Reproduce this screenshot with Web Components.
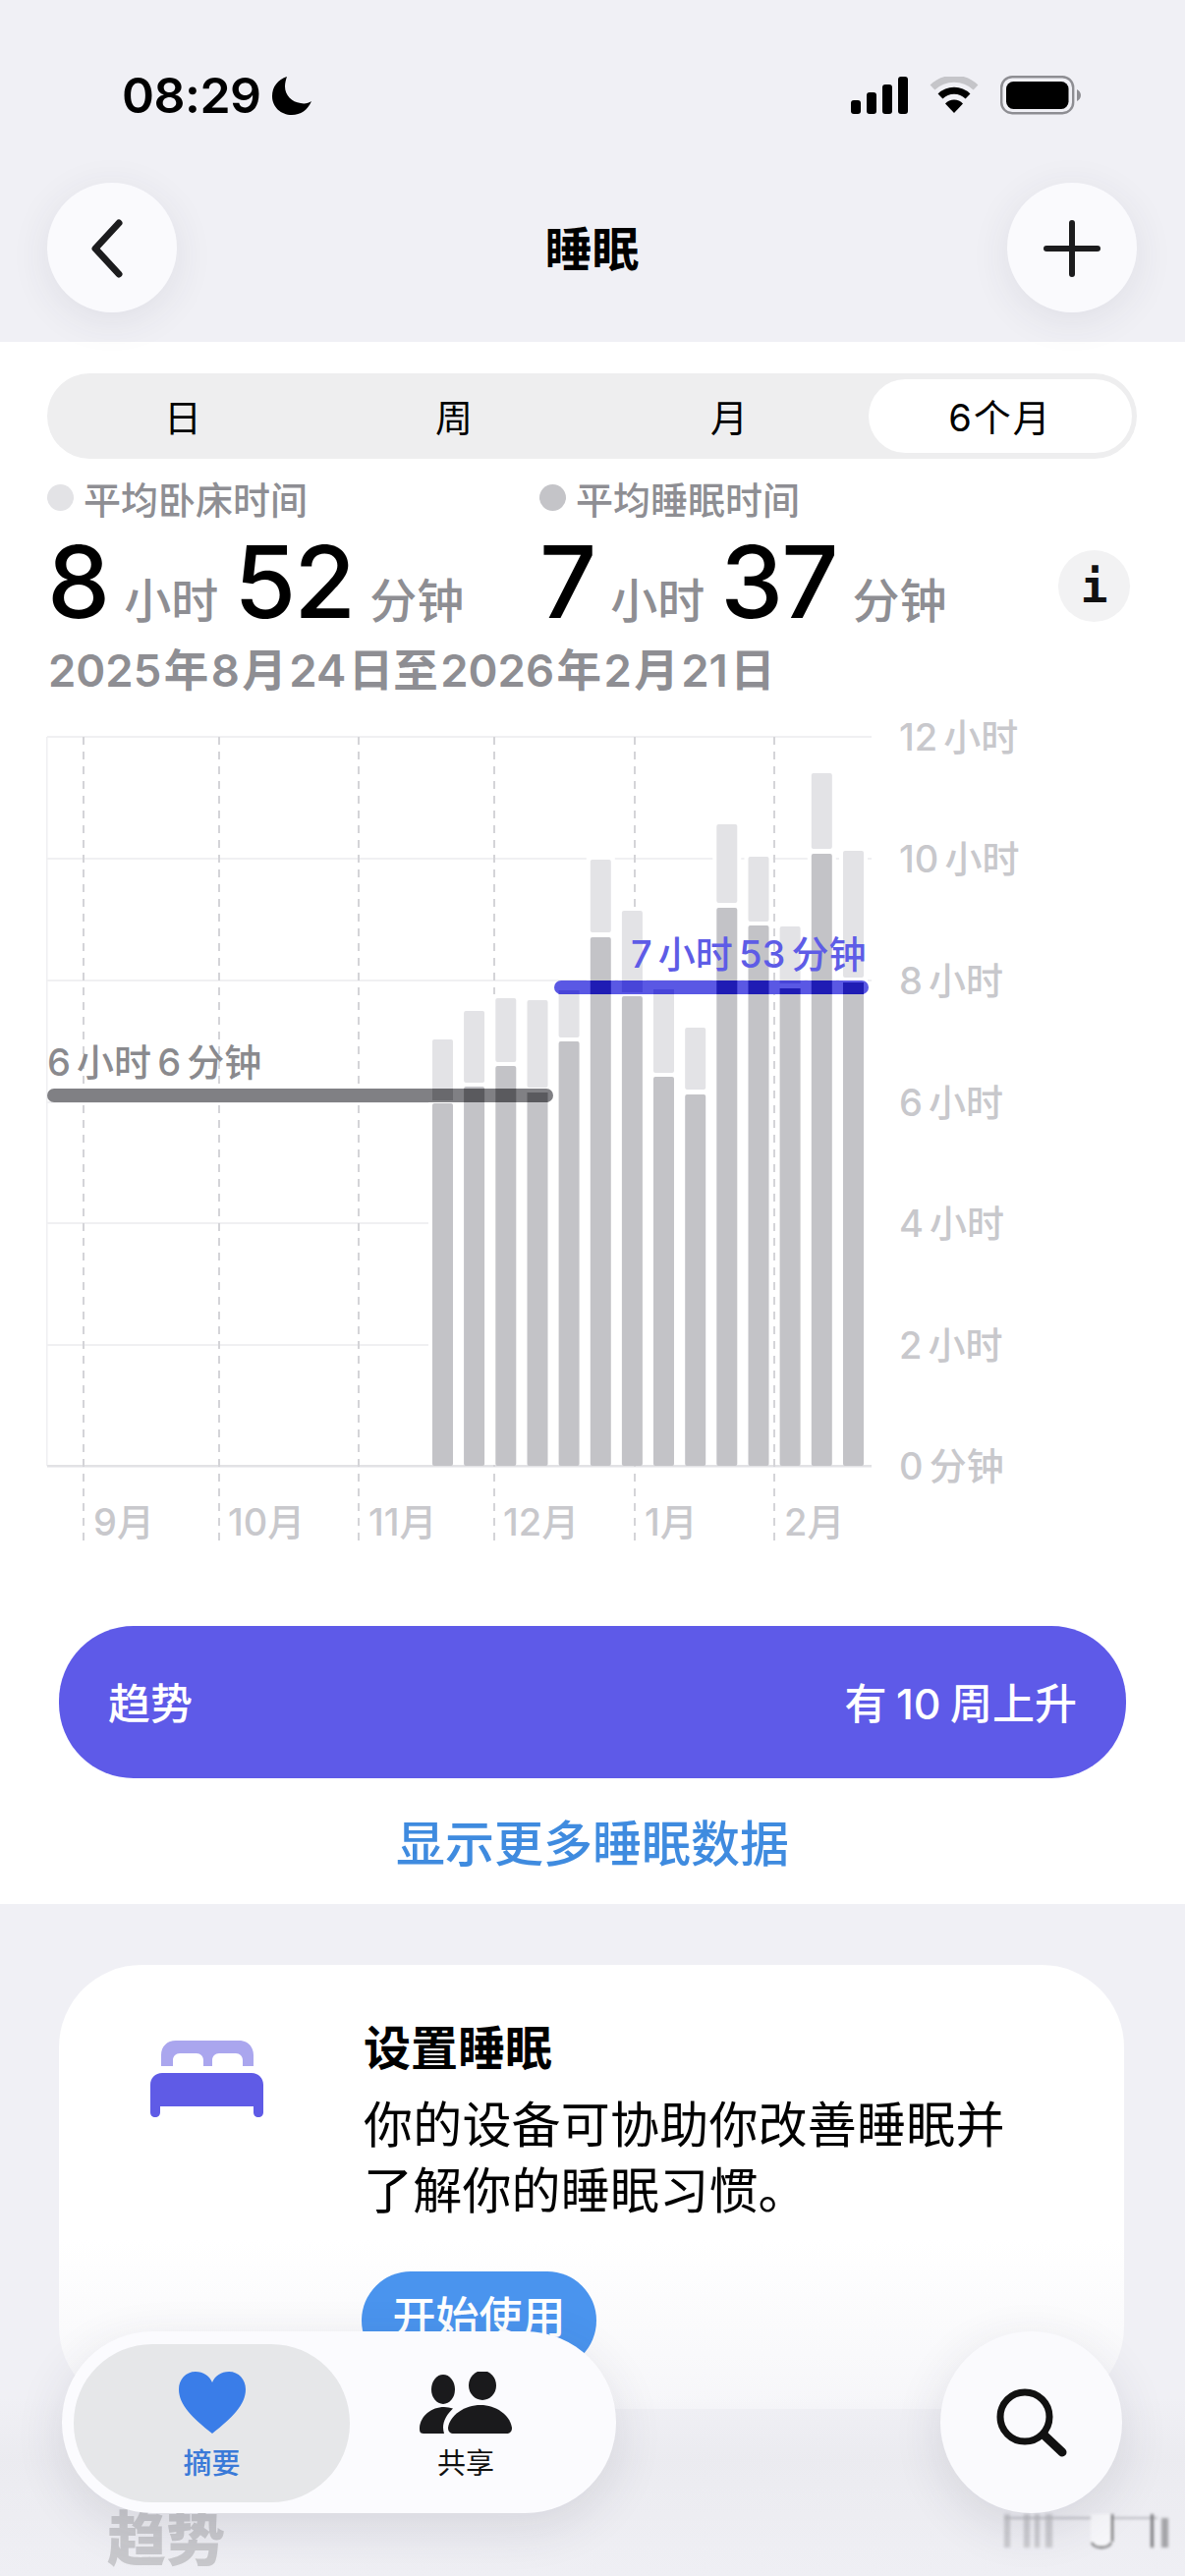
<!DOCTYPE html>
<html lang="zh-CN">
<head>
<meta charset="utf-8">
<title>睡眠</title>
<style>
	html, body { margin: 0; padding: 0; background: #f0f0f5; }
	body { width: 1206px; height: 2622px; overflow: hidden; font-family: Inter, "Noto Sans CJK SC", sans-serif; }
</style>
</head>
<body>
<sleep-app></sleep-app>
<script>
(function() {
	const FONT = 'Inter, "Noto Sans CJK SC", sans-serif';

	class StatusBar extends HTMLElement {
		constructor() {
			super();
			this.attachShadow({mode: "open"}).innerHTML = `
				<style>
				:host { display: flex; align-items: center; justify-content: space-between; height: 76px; padding: 59px 106px 0 124px; font-family: ${FONT}; }
				.left { display: flex; align-items: center; gap: 11px; font-size: 50px; font-weight: 600; color: #000; letter-spacing: -0.5px; }
				.right { display: flex; align-items: center; gap: 22px; }
				svg { display: block; }
				</style>
				<div class="left"><span>08:29</span>
					<svg width="40" height="39" viewBox="0 0 40 39"><path d="M15 0C6 3 0 10 0 20c0 11 9 19 20 19 9 0 16-5 20-14-3 2-7 3-11 2-9-1-16-8-16-17 0-4 1-7 2-10z" fill="#000"/></svg>
				</div>
				<div class="right">
					<svg width="58" height="38" viewBox="0 0 58 38"><rect x="0" y="24" width="10" height="14" rx="3"/><rect x="16" y="16" width="10" height="22" rx="3"/><rect x="32" y="8" width="10" height="30" rx="3"/><rect x="48" y="0" width="10" height="38" rx="3"/></svg>
					<svg width="50" height="38" viewBox="0 0 50 38"><path d="M3 11A32 32 0 0 1 47 11" fill="none" stroke="#c5c5c9" stroke-width="7"/><path d="M11 20A20 20 0 0 1 39 20" fill="none" stroke="#000" stroke-width="7"/><path d="M16 27.5A12 12 0 0 1 34 27.5L25 37z" fill="#000"/></svg>
					<svg width="82" height="40" viewBox="0 0 82 40"><rect x="1.2" y="1.2" width="73" height="37" rx="11" fill="none" stroke="#8e8e93" stroke-width="2.4"/><rect x="6" y="6" width="63.500" height="28" rx="7.500" fill="#000"/><path d="M78 14c2 1 4 3 4 6s-2 5-4 6z" fill="#8e8e93"/></svg>
				</div>`;
		}
	}
	customElements.define("status-bar", StatusBar);

	class RoundButton extends HTMLElement {
		constructor() {
			super();
			this.attachShadow({mode: "open"}).innerHTML = `
				<style>
				:host { display: flex; align-items: center; justify-content: center; width: var(--size, 132px); height: var(--size, 132px); border-radius: 50%; background: #fafafd; box-shadow: 0 8px 40px rgba(60,60,80,.09); flex: none; }
				</style>
				<slot></slot>`;
		}
	}
	customElements.define("round-button", RoundButton);

	class NavBar extends HTMLElement {
		constructor() {
			super();
			this.attachShadow({mode: "open"}).innerHTML = `
				<style>
				:host { display: flex; align-items: center; justify-content: space-between; height: 132px; padding: 51px 49px 30px 48px; font-family: ${FONT}; }
				h1 { margin: 0 0 5px; font-size: 48px; font-weight: 700; color: #000; }
				svg { display: block; }
				</style>
				<round-button><svg width="40" height="60" viewBox="0 0 40 60" style="margin-right:8px;margin-top:2px"><path d="M31 4 7 30l24 26" fill="none" stroke="#1c1c1e" stroke-width="7" stroke-linecap="round" stroke-linejoin="round"/></svg></round-button>
				<h1>睡眠</h1>
				<round-button><svg width="58" height="58" viewBox="0 0 58 58" style="margin-top:2px"><path d="M29 3v52M3 29h52" fill="none" stroke="#1c1c1e" stroke-width="6" stroke-linecap="round"/></svg></round-button>`;
		}
	}
	customElements.define("nav-bar", NavBar);

	class SegmentPicker extends HTMLElement {
		constructor() {
			super();
			const items = ["日", "周", "月", "6个月"];
			this.attachShadow({mode: "open"}).innerHTML = `
				<style>
				:host { display: grid; grid-template-columns: 276px 276px 284px 1fr; align-items: stretch; height: 87px; box-sizing: border-box; padding: 6px 5px 6px 0; border-radius: 44px; background: #eeeeef; font-family: ${FONT}; font-size: 38px; color: #000; }
				div { display: flex; align-items: center; justify-content: center; border-radius: 38px; padding-bottom: 3px; }
				.on { background: #fff; letter-spacing: 2px; }
				</style>
				${items.map(t => `<div class="${t === "6个月" ? "on" : ""}">${t}</div>`).join("")}`;
		}
	}
	customElements.define("segment-picker", SegmentPicker);

	class StatBlock extends HTMLElement {
		constructor() {
			super();
			const dot = this.getAttribute("dot");
			const label = this.getAttribute("label");
			const [h, m] = this.getAttribute("value").split(":");
			this.attachShadow({mode: "open"}).innerHTML = `
				<style>
				:host { display: block; font-family: ${FONT}; }
				.label { display: flex; align-items: center; gap: 10px; height: 46px; font-size: 38px; font-weight: 500; color: #8e8e93; }
				i { width: 27px; height: 27px; border-radius: 50%; background: ${dot}; }
				.value { display: flex; align-items: baseline; margin-top: 13px; height: 100px; line-height: 100px; font-size: 102px; font-weight: 500; color: #000; letter-spacing: -2px; }
				small { font-size: 48px; font-weight: 500; color: #8e8e93; letter-spacing: 0; margin: 0 16px; }
				</style>
				<div class="label"><i></i><span>${label}</span></div>
				<div class="value"><span>${h}</span><small>小时</small><span>${m}</span><small>分钟</small></div>`;
		}
	}
	customElements.define("stat-block", StatBlock);

	// [light top, light bottom, dark top] in page px
	const BARS = [
		[1058, 1120, 1123], [1029, 1102, 1106], [1016, 1081, 1085], [1018, 1107, 1112],
		[1008, 1056, 1060], [875, 949, 954], [927, 1010, 1014], [1007, 1092, 1096],
		[1046, 1109, 1114], [839, 919, 924], [872, 938, 942], [943, 1001, 1006],
		[787, 864, 869], [866, 995, 1000]
	];

	class SleepChart extends HTMLElement {
		constructor() {
			super();
			const top = 725, base = 1492, w = 1206, h = 1590 - top;
			const y = v => v - top;
			const grid = [750, 874, 998, 1122, 1245, 1369];
			const gridLabels = ["12 小时", "10 小时", "8 小时", "6 小时", "4 小时", "2 小时", "0 分钟"];
			const vlines = [85, 223, 365, 503, 646, 788];
			const months = [[95, "9月"], [232, "10月"], [375, "11月"], [512, "12月"], [656, "1月"], [798, "2月"]];
			const bx = i => 440 + i * 32.15;
			let halos = "", bars = "", over = "";
			BARS.forEach((b, i) => {
				const x = bx(i).toFixed(1);
				halos += `<rect x="${(bx(i) - 4).toFixed(1)}" y="${y(b[0]) - 4}" width="29" height="${base - b[0] + 3}" fill="#fff"/>`;
				bars += `<rect x="${x}" y="${y(b[0])}" width="21" height="${b[1] - b[0]}" rx="2" fill="#e3e3e6"/>`;
				bars += `<rect x="${x}" y="${y(b[2])}" width="21" height="${base - b[2]}" rx="2" fill="#c3c3c7"/>`;
				if (i < 4) over += this.seg(x, y, b, [1108, 1122], "#69696d", "#5a5a5e");
				else over += this.seg(x, y, b, [998, 1012], "#4845d8", "#1f1cb4");
			});
			this.attachShadow({mode: "open"}).innerHTML = `
				<style>
				:host { display: block; width: ${w}px; height: ${h}px; font-family: ${FONT}; }
				svg { display: block; }
				text { font-family: ${FONT}; font-size: 38px; font-weight: 500; word-spacing: -4px; }
				</style>
				<svg width="${w}" height="${h}" viewBox="0 0 ${w} ${h}">
					<rect x="47" y="${y(750)}" width="1.500" height="${base - 750}" fill="#efeff1"/>
					${grid.map(g => `<rect x="48" y="${y(g) - 1}" width="${g >= 1122 ? 388 : 839}" height="2" fill="#f0f0f2"/>`).join("")}
					<rect x="48" y="${y(base) - 1}" width="839" height="2.500" fill="#e2e2e5"/>
					${vlines.map(v => `<path d="M${v} ${y(750)}V${1572 - top}" stroke="#d4d4d8" stroke-width="2" stroke-dasharray="8 7"/>`).join("")}
					${halos}
					${bars}
					<text x="642" y="${y(985)}" fill="#5e5ce6">7 小时 53 分钟</text>
					<rect x="48" y="${y(1108)}" width="515" height="14" rx="7" fill="#808084"/>
					<rect x="564" y="${y(998)}" width="320" height="14" rx="7" fill="#5a58e4"/>
					${over}
					<text x="48" y="${y(1095)}" fill="#8a8a8e">6 小时 6 分钟</text>
					${gridLabels.map((t, i) => `<text x="915" y="${y(i === 6 ? base : grid[i]) + 14}" fill="#c8c8cc">${t}</text>`).join("")}
					${months.map(m => `<text x="${m[0]}" y="${y(1563)}" fill="#c8c8cc">${m[1]}</text>`).join("")}
				</svg>`;
		}

		// darker patch where a mean line crosses a bar
		seg(x, y, b, s, mid, dark) {
			let out = "";
			const a = Math.max(s[0], b[0]), c = Math.min(s[1], b[1]);
			if (c > a) out += `<rect x="${x}" y="${y(a)}" width="21" height="${c - a}" fill="${mid}"/>`;
			const d = Math.max(s[0], b[2]);
			if (s[1] > d) out += `<rect x="${x}" y="${y(d)}" width="21" height="${s[1] - d}" fill="${dark}"/>`;
			return out;
		}
	}
	customElements.define("sleep-chart", SleepChart);

	class TrendBanner extends HTMLElement {
		constructor() {
			super();
			this.attachShadow({mode: "open"}).innerHTML = `
				<style>
				:host { display: flex; align-items: center; justify-content: space-between; height: 155px; margin: 0 60px; padding: 0 50px; border-radius: 76px; background: #5e5ae8; color: #fff; font-family: ${FONT}; font-size: 43px; font-weight: 500; word-spacing: -2px; }
				span { padding-bottom: 3px; }
				</style>
				<span><slot name="left"></slot></span><span><slot name="right"></slot></span>`;
		}
	}
	customElements.define("trend-banner", TrendBanner);

	class SetupCard extends HTMLElement {
		constructor() {
			super();
			this.attachShadow({mode: "open"}).innerHTML = `
				<style>
				:host { display: flex; box-sizing: border-box; height: 452px; margin: 0 62px 0 60px; padding: 61px 0 0 93px; gap: 102px; border-radius: 84px; background: linear-gradient(#fff 0, #fff 62%, #f6f6f9 100%); font-family: ${FONT}; color: #000; overflow: hidden; }
				svg { display: block; margin-top: 16px; flex: none; }
				h2 { margin: 0; font-size: 48px; line-height: 48px; font-weight: 700; }
				p { margin: 21px 0 0; font-size: 50px; line-height: 67px; letter-spacing: .2px; white-space: nowrap; }
				button { display: block; margin: 48px 0 0 -2px; width: 239px; height: 100px; padding: 0 0 12px; border: 0; border-radius: 50px; background: #4a94ee; color: #fff; font: 500 44px ${FONT}; }
				</style>
				<svg width="115" height="78" viewBox="0 0 115 78">
					<path d="M11 26V15C11 6 17 0 26 0h64c9 0 15 6 15 15v11H94v-6c0-4-3-7-7-7H70c-4 0-7 3-7 7v6H54v-6c0-4-3-7-7-7H30c-4 0-7 3-7 7v6z" fill="#aaa6ee"/>
					<path d="M12 33h91c7 0 12 5 12 12v28c0 3-2 5-5 5s-5-2-5-5v-6H10v6c0 3-2 5-5 5s-5-2-5-5V45c0-7 5-12 12-12z" fill="#5f5be6"/>
				</svg>
				<div>
					<h2>设置睡眠</h2>
					<p>你的设备可协助你改善睡眠并<br>了解你的睡眠习惯。</p>
					<button>开始使用</button>
				</div>`;
		}
	}
	customElements.define("setup-card", SetupCard);

	class TabBar extends HTMLElement {
		constructor() {
			super();
			this.attachShadow({mode: "open"}).innerHTML = `
				<style>
				:host { position: absolute; left: 63px; top: 2373px; box-sizing: border-box; display: flex; width: 564px; height: 185px; padding: 13px 0 11px 12px; border-radius: 93px; background: #fbfbfe; box-shadow: 0 14px 50px rgba(50,50,70,.12); font-family: ${FONT}; }
				.tab { display: flex; flex-direction: column; align-items: center; box-sizing: border-box; padding-top: 28px; font-size: 29px; line-height: 30px; }
				.a { width: 281px; border-radius: 80px; background: #e6e7e9; color: #3a7ad8; font-weight: 500; }
				.b { width: 236px; color: #111; font-weight: 400; }
				svg { display: block; margin-bottom: 16px; }
				</style>
				<div class="tab a">
					<svg width="68" height="63" viewBox="0 0 68 63"><path d="M34 63C14 47 0 34 0 18 0 8 7 0 17 0c8 0 14 4 17 11C37 4 43 0 51 0c10 0 17 8 17 18 0 16-14 29-34 45z" fill="#3a7de8"/></svg>
					<span>摘要</span>
				</div>
				<div class="tab b">
					<svg width="94" height="63" viewBox="0 0 94 63"><ellipse cx="24" cy="18" rx="12" ry="15" fill="#1a1a1c"/><ellipse cx="64" cy="14" rx="14" ry="15" fill="#1a1a1c"/><path d="M4 63C0 63 0 60 0 57 1 45 12 36 25 36c3 0 6 .5 9 1.500C28 43 24 50 24 57c0 2 .5 4 1 6z" fill="#1a1a1c"/><path d="M35 63c-4 0-6-2-6-6 2-13 17-23 33-23s30 10 32 23c0 4-2 6-6 6z" fill="#1a1a1c"/></svg>
					<span>共享</span>
				</div>`;
		}
	}
	customElements.define("tab-bar", TabBar);

	class SleepApp extends HTMLElement {
		constructor() {
			super();
			this.attachShadow({mode: "open"}).innerHTML = `
				<style>
				:host { display: block; position: relative; width: 1206px; height: 2622px; overflow: hidden; background: #f0f0f5; font-family: ${FONT}; }
				header { height: 348px; background: #f0f0f5; }
				main { height: 1590px; background: #fff; box-sizing: border-box; padding-top: 32px; }
				segment-picker { margin: 0 49px 0 48px; }
				.stats { display: flex; margin: 16px 0 0 48px; position: relative; }
				stat-block:first-child { width: 501px; }
				.info { position: absolute; left: 1029px; top: 77px; width: 73px; height: 73px; border-radius: 50%; background: #f2f2f3; display: flex; align-items: center; justify-content: center; font: 700 46px "DejaVu Sans Mono", monospace; color: #111; }
				.date { margin: 17px 0 0 49px; height: 49px; line-height: 48px; font-size: 45.500px; font-weight: 600; color: #8e8e93; white-space: nowrap; word-spacing: -9px; }
				sleep-chart { margin-top: 17px; }
				trend-banner { margin-top: 65px; }
				.more { display: block; text-align: center; margin-top: 39px; height: 56px; line-height: 56px; font-size: 50px; font-weight: 500; color: #3f8bdf; }
				setup-card { margin-top: 62px; }
				.ghost { position: absolute; left: 109px; top: 2551px; font-size: 60px; font-weight: 800; color: #c8c8cc; line-height: 66px; }
				.search { position: absolute; left: 957px; top: 2373px; --size: 185px; box-shadow: 0 14px 50px rgba(50,50,70,.12); }
				.fade { position: absolute; left: 0; right: 0; top: 2440px; height: 182px; background: linear-gradient(rgba(234,234,239,0), rgba(234,234,239,.8) 35%, rgba(238,238,243,.5)); }
				.smear { position: absolute; left: 1010px; top: 2555px; filter: blur(1.500px); }
				</style>
				<header><status-bar></status-bar><nav-bar></nav-bar></header>
				<main>
					<segment-picker></segment-picker>
					<div class="stats">
						<stat-block dot="#e3e3e6" label="平均卧床时间" value="8:52"></stat-block>
						<stat-block dot="#c4c4c8" label="平均睡眠时间" value="7:37"></stat-block>
						<div class="info">i</div>
					</div>
					<div class="date">2025 年 8 月 24 日至 2026 年 2 月 21 日</div>
					<sleep-chart></sleep-chart>
					<trend-banner><span slot="left">趋势</span><span slot="right">有 10 周上升</span></trend-banner>
					<a class="more">显示更多睡眠数据</a>
				</main>
				<setup-card></setup-card>
				<div class="fade"></div>
				<div class="ghost">趋势</div>
				<svg class="smear" width="180" height="50" viewBox="0 0 180 50">
					<path d="M12 8h156" stroke="#8f8f94" stroke-width="1.500" opacity=".7"/>
					<g fill="#b6b6ba" opacity=".65"><rect x="12" y="4" width="6" height="34"/><rect x="32" y="4" width="6" height="34"/><rect x="43" y="4" width="5" height="34"/><rect x="54" y="4" width="7" height="34"/></g>
					<path d="M100 4v28c0 4 6 6 11 6s11-2 11-6V4" fill="#f7f7fa" stroke="none"/>
					<path d="M101 33c2 4 6 5 10 5s8-1 10-5M122 4v28" fill="none" stroke="#333" stroke-width="1.500"/>
					<rect x="161" y="4" width="3" height="34" fill="#77777b"/><rect x="172" y="8" width="7" height="30" fill="#a5a5a9"/>
				</svg>
				<tab-bar></tab-bar>
				<round-button class="search"><svg width="72" height="70" viewBox="0 0 72 70"><circle cx="29" cy="29" r="25" fill="none" stroke="#111" stroke-width="7"/><path d="M49 48 67 65" stroke="#111" stroke-width="9" stroke-linecap="round"/></svg></round-button>`;
		}
	}
	customElements.define("sleep-app", SleepApp);
})();
</script>
</body>
</html>
